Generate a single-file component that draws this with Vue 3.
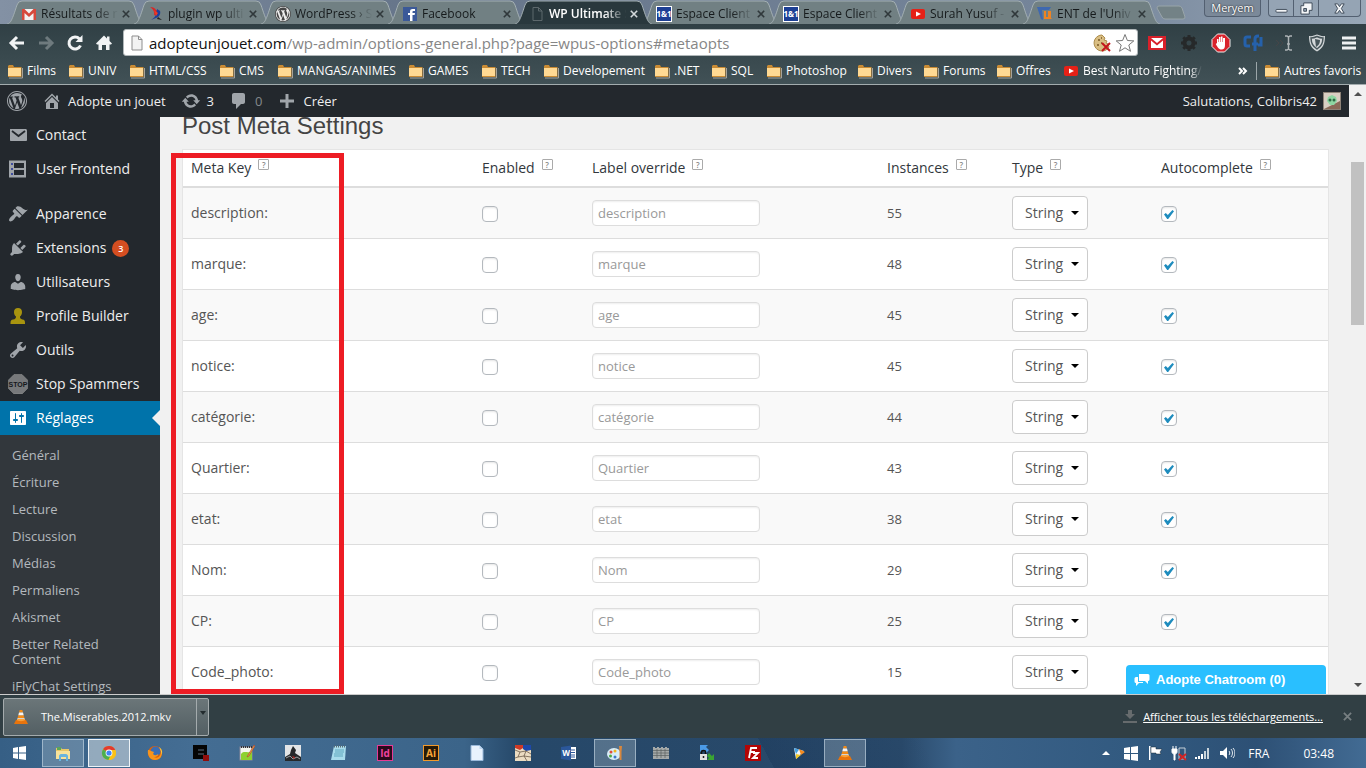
<script setup>
import { ref } from 'vue';

const oneAndOne = '<rect width="16" height="16" fill="#fff"/><rect x="1" y="1" width="14" height="14" fill="#1c3f94"/><text x="8" y="11" font-size="8" font-weight="bold" text-anchor="middle" fill="#fff" font-family="Open Sans, sans-serif">1&amp;1</text>';
const youtube = '<rect x="1" y="3" width="14" height="10" rx="2" fill="#e62117"/><path d="M6 5.500l5 2.500-5 2.500z" fill="#fff"/>';
const wpMark = 'M20 10c0-5.520-4.480-10-10-10S0 4.480 0 10s4.480 10 10 10 10-4.480 10-10zM10 1.010c4.970 0 8.990 4.020 8.990 8.990s-4.020 8.990-8.990 8.990S1.010 14.970 1.010 10 5.030 1.010 10 1.010zM8.010 14.820L4.960 6.610c.49-.03 1.050-.08 1.050-.08.43-.05.38-1.010-.06-.99 0 0-1.290.1-2.130.1-.15 0-.33 0-.52-.01 1.440-2.170 3.900-3.600 6.700-3.600 2.090 0 3.990.79 5.410 2.090-.6-.08-1.450.35-1.450 1.420 0 .66.38 1.220.79 1.880.31.54.5 1.220.5 2.210 0 1.340-1.270 4.480-1.270 4.480l-2.710-7.500c.48-.03.75-.16.75-.16.43-.05.38-1.100-.05-1.080 0 0-1.300.11-2.140.11-.78 0-2.110-.11-2.110-.11-.43-.02-.48 1.060-.05 1.080l.84.08 1.120 3.040zm6.020 2.150L16.640 10s.67-1.690.39-3.810c.63 1.140.94 2.420.94 3.810 0 2.960-1.560 5.580-3.940 6.970zM2.680 6.770L6.500 17.250c-2.670-1.300-4.470-4.080-4.470-7.250 0-1.160.2-2.230.65-3.230zm7.450 4.530l2.290 6.250c-.75.27-1.570.42-2.420.42-.72 0-1.410-.11-2.060-.3z';
const cone = '<path d="M6.700 1h2.600l.7 2.600H6zM5.300 6.200h5.400l.8 3H4.500z" fill="#f28a17"/><path d="M6 3.600h4l.7 2.600H5.300zM4.500 9.200h7l.5 2.300H4z" fill="#f4f4f4"/><path d="M3 11h10l2 4H1z" fill="#e8740c"/><path d="M4 11c1 1.500 7 1.500 8 0l-.3-1H4.300z" fill="#f9a13a"/>';

const tabs = [
  { title: 'Résultats de r', icon: '<rect x="1" y="3" width="14" height="11" fill="#f2f2f2"/><path d="M1 3h2.500L8 7.500 12.500 3H15v11h-2.500V7L8 11 3.500 7v7H1z" fill="#d6493c"/>' },
  { title: 'plugin wp ulti', icon: '<path d="M2 1c3 0 5 1 6 3l4 1c0 3-1 4-3 5L6 9C7 6 5 3 2 1z" fill="#d92626"/><path d="M9 3l3 2c1 3-1 6-4 7l-5 2c3-2 5-4 5-6z" fill="#1f3f9c"/><path d="M6 4l4 3-2 3z" fill="#f03a22"/><path d="M10 11l4 3-5-1z" fill="#222"/>' },
  { title: 'WordPress › S', icon: `<circle cx="8" cy="8" r="7.500" fill="#eee"/><g transform="scale(.8)"><path d="${wpMark}" fill="#464646"/></g>` },
  { title: 'Facebook', icon: '<rect x="1" y="1" width="14" height="14" fill="#3b5998"/><path d="M8 15V9H6V7h2V5.500C8 3.800 9 3 10.500 3H13v2h-1.500c-.7 0-1 .3-1 1v1H13l-.4 2h-2.100v6z" fill="#fff"/>' },
  { title: 'WP Ultimate S', active: true, icon: '<path d="M4 1.500h5.500L13 5v9.500H4zM9.500 1.500V5H13" fill="none" stroke="#5d686c"/>' },
  { title: 'Espace Client', icon: oneAndOne },
  { title: 'Espace Client', icon: oneAndOne },
  { title: 'Surah Yusuf -', icon: youtube },
  { title: "ENT de l'Univ", icon: '<path d="M0 1h14l-2 3H5l1 10-2-1z" fill="#3e68b0"/><path d="M7 5h2v6h2V5h3v7l1 1h-8z" fill="#ee8322"/>' },
];

const bookmarks = [
  'Films', 'UNIV', 'HTML/CSS', 'CMS', 'MANGAS/ANIMES', 'GAMES', 'TECH', 'Developement',
  '.NET', 'SQL', 'Photoshop', 'Divers', 'Forums', 'Offres',
];

const extensions = [
  { name: 'Gmail', icon: '<rect x="1" y="3" width="18" height="14" fill="#d8202a"/><path d="M4 5h12l-6 5z" fill="#fff"/><path d="M4 15V7.500l6 5 6-5V15z" fill="#fff"/>' },
  { name: 'Réglages rapides', icon: '<circle cx="10" cy="10" r="4.500" fill="none" stroke="#26292a" stroke-width="4"/><path d="M10 2v4M10 14v4M2 10h4M14 10h4M4.300 4.300l2.700 2.700M13 13l2.700 2.700M4.300 15.700L7 13M13 7l2.700-2.700" stroke="#26292a" stroke-width="3"/>' },
  { name: 'Bloqueur', icon: '<path d="M6.500 1h7L19 6.500v7L13.500 19h-7L1 13.500v-7z" fill="#d9222b" stroke="#eee"/><path d="M6 10V6h1.500v3h.5V4h1.500v5h.5V3.500h1.500V9h.5V5H14v7c0 3-1 4.500-3.500 4.500S7 15 4.800 11l1.200-1z" fill="#fff"/>' },
  { name: 'Réseau social', icon: '<path d="M8 4H4Q2 4 2 6v5q0 2 2 2h3M12 18V6q0-3 3-3h1M9 11h6M15 12h3V4" fill="none" stroke="#2561ab" stroke-width="3"/>' },
  { name: 'Curseur', icon: '<path d="M1 7l3 3-3 3M5 7l3 3-3 3" stroke="#454547" fill="none"/><path d="M10 3h2l1.500 1L15 3h2M13.500 4v12M10 17h2l1.500-1 1.500 1h2M12 11h3" stroke="#aeb4b6" stroke-width="1.500" fill="none"/>' },
  { name: 'Protection', icon: '<path d="M2 3c3 .5 5.500-.5 8-1.500C12.500 2.500 15 3.500 18 3c0 8-2 12-8 15.500C4 15 2 11 2 3z" fill="#d3d7d9"/><path d="M4 5c2.500 0 4-.5 6-1.500 2 1 3.500 1.500 6 1.500-.3 5.500-1.500 8-6 11-4.500-3-5.700-5.500-6-11z" fill="none" stroke="#47555a" stroke-width="1.500"/><path d="M8 6l5 1c0 3-1 5-4 7z" fill="#47555a"/>' },
  { name: 'Menu', icon: '<path d="M3 5h14M3 10h14M3 15h14" stroke="#eef1f2" stroke-width="3"/>' },
];

const menu = [
  { label: 'Contact', icon: '<path d="M2.500 4h15c.8 0 1.500.6 1.500 1.500V15c0 .6-.5 1-1.500 1H3c-.6 0-1-.4-1-1V5c0-.6 0-1 .5-1z" fill="#a0a5aa"/><path d="M4 6l6.500 5L17 6" fill="none" stroke="#23282d" stroke-width="1.800"/>' },
  { label: 'User Frontend', icon: '<rect x="1" y="1.500" width="17" height="17" fill="#a0a5aa"/><path d="M6 4h10v5H6zM6 11h10v5H6z" fill="#23282d"/><path d="M3 4h2v2H3zM3 9h2v2H3zM3 14h2v2H3z" fill="#3f4ea0"/>' },
  { label: 'Apparence', gap: true, icon: '<path d="M14.480 11.060L7.410 3.990l1.500-1.500c.5-.56 2.300-.47 3.510.32 1.210.8 1.430 1.280 2.910 2.100 1.180.64 2.450 1.260 4.450.85zm-.71.71L6.700 4.700 4.930 6.470c-.39.39-.39 1.020 0 1.410l1.060 1.060c.39.39.39 1.030 0 1.420-.6.6-1.430 1.110-2.210 1.690-.35.26-.7.53-1.010.84C1.430 14.230.4 16.080 1.400 17.070c.99 1 2.840-.03 4.180-1.360.31-.31.58-.66.85-1.020.57-.78 1.080-1.610 1.690-2.210.39-.39 1.020-.39 1.410 0l1.060 1.060c.39.39 1.020.39 1.410 0z" fill="#a0a5aa"/>' },
  { label: 'Extensions', badge: 3, icon: '<path d="M13.110 4.360L9.870 7.600 8 5.730l3.240-3.240c.35-.34 1.050-.2 1.560.32.52.51.66 1.210.31 1.550zm-8 1.770l.91-1.120 9.010 9.010-1.190.84c-.71.71-2.630 1.160-3.820 1.160H6.140L4.900 17.260c-.59.59-1.540.59-2.120 0-.59-.58-.59-1.530 0-2.120l1.240-1.240v-3.880c0-1.130.4-3.190 1.090-3.890zm7.260 3.970l3.240-3.240c.34-.35 1.040-.21 1.550.31.52.51.66 1.210.31 1.550l-3.240 3.250z" fill="#a0a5aa"/>' },
  { label: 'Utilisateurs', icon: '<path d="M10 9.250c-2.270 0-2.730-3.440-2.730-3.440C7 4.020 7.820 2 9.970 2c2.160 0 2.980 2.020 2.710 3.810 0 0-.41 3.440-2.680 3.440zm0 2.570L12.720 10c2.390 0 4.520 2.330 4.520 4.530v2.490s-3.650 1.130-7.240 1.130c-3.650 0-7.240-1.130-7.240-1.130v-2.490c0-2.250 1.940-4.480 4.470-4.480z" fill="#a0a5aa"/>' },
  { label: 'Profile Builder', icon: '<path d="M10 2c2.500 0 4 1.500 4 4 0 2-.8 3.500-2 4.500 0 2 .5 2.500 2.500 3 2 .4 2.500 1 2.500 3.500v1H2.500v-1c0-2.500.7-3.100 2.700-3.500S8 12.500 8 10.500C6.800 9.500 6 8 6 6c0-2.500 1.500-4 4-4z" fill="#a8940f"/>' },
  { label: 'Outils', icon: '<path d="M16.680 9.770c-1.340 1.340-3.300 1.670-4.950.99l-5.410 6.520c-.99.99-2.590.99-3.580 0s-.99-2.590 0-3.570l6.520-5.420c-.68-1.650-.35-3.610.99-4.950 1.280-1.280 3.120-1.620 4.720-1.060l-2.890 2.890 2.820 2.820 2.860-2.870c.53 1.580.18 3.390-1.080 4.650zM3.810 16.210c.4.39 1.040.39 1.430 0 .4-.4.4-1.040 0-1.430-.39-.4-1.030-.4-1.430 0-.39.39-.39 1.030 0 1.430z" fill="#a0a5aa"/>' },
  { label: 'Stop Spammers', icon: '<path d="M6 .5h8l5.500 5.500v8.500L14 20H6L.5 14.500V6z" fill="#77797b" stroke="#999" stroke-width=".5"/><text x="10" y="13" text-anchor="middle" font-size="7" font-weight="bold" fill="#15181b" font-family="Liberation Sans, sans-serif">STOP</text>' },
  { label: 'Réglages', current: true, icon: '<path d="M18 16V4c0-.55-.45-1-1-1H3c-.55 0-1 .45-1 1v12c0 .55.45 1 1 1h14c.55 0 1-.45 1-1zM8 11h1c.55 0 1 .45 1 1s-.45 1-1 1H8v1.500c0 .28-.22.5-.5.5s-.5-.22-.5-.5V13H6c-.55 0-1-.45-1-1s.45-1 1-1h1V5.500c0-.28.22-.5.5-.5s.5.22.5.5V11zm5-2h-1c-.55 0-1-.45-1-1s.45-1 1-1h1V5.500c0-.28.22-.5.5-.5s.5.22.5.5V7h1c.55 0 1 .45 1 1s-.45 1-1 1h-1v5.500c0 .28-.22.5-.5.5s-.5-.22-.5-.5V9z" fill="#fff"/>' },
];

const submenu = [
  'Général', 'Écriture', 'Lecture', 'Discussion', 'Médias', 'Permaliens', 'Akismet',
  'Better Related Content', 'iFlyChat Settings',
];

const columns = ['Meta Key', 'Enabled', 'Label override', 'Instances', 'Type', 'Autocomplete'];

const rows = ref([
  { key: 'description', count: 55 },
  { key: 'marque', count: 48 },
  { key: 'age', count: 45 },
  { key: 'notice', count: 45 },
  { key: 'catégorie', count: 44 },
  { key: 'Quartier', count: 43 },
  { key: 'etat', count: 38 },
  { key: 'Nom', count: 29 },
  { key: 'CP', count: 25 },
  { key: 'Code_photo', count: 15 },
].map((row) => ({ ...row, enabled: false, label: '', type: 'String', autocomplete: true })));

const taskbar = [
  { name: 'Explorateur', open: true, icon: '<path d="M1 3h5l1 1h7v10H1z" fill="#e9c766"/><path d="M2 2h4v3H2z" fill="#5aa55a"/><path d="M1 6h14v8H1z" fill="#f8e29a"/><path d="M4 16v-5c0-1 1-2 2-2h5c1 0 2 1 2 2v5h-2v-4H6v4z" fill="#6ab4dd"/>' },
  { name: 'Chrome', open: true, front: true, icon: '<circle cx="8" cy="8" r="7" fill="#fbc116"/><path d="M8 8L2 4.300A7 7 0 0 1 14.300 5z" fill="#e33b2e"/><path d="M8 8L2 4.300A7 7 0 0 0 7.500 15L10.500 9z" fill="#4caf50"/><path d="M7.500 15A7 7 0 0 0 14.300 5H8l2.500 4z" fill="#fbc116"/><circle cx="8" cy="8" r="3.400" fill="#fff"/><circle cx="8" cy="8" r="2.600" fill="#4285f4"/>' },
  { name: 'Firefox', icon: '<circle cx="8" cy="8" r="7" fill="#e66000"/><circle cx="8.500" cy="6.500" r="5" fill="#3c6eb4"/><path d="M1 5c1 0 2 0 3 1l3 1-1 2c2 2 4 1 5 0 1 1-1 3-4 3 4 2 7-1 7-6 2 5-1 9-6 9-5 0-8-5-7-10z" fill="#f7941d"/><path d="M12 2c3 2 4 5 2.500 8 0-3-1-5-2.500-8z" fill="#ffcb3d"/>' },
  { name: 'Éditeur', icon: '<rect width="14" height="14" fill="#050505"/><path d="M5 5h6M5 9h6" stroke="#5f6f80" stroke-width="1"/><rect x="10" y="10" width="6" height="6" fill="#8f0d0d"/>' },
  { name: 'Notepad++', icon: '<rect x="1" y="2" width="12" height="13" fill="#f4f6ee" stroke="#889"/><path d="M2 9c3-4 7 0 11-3v9H2z" fill="#8ed12f"/><path d="M2 2h11" stroke="#333" stroke-width="2" stroke-dasharray="1 1"/><path d="M15 0l1 1-6 10-2 1 1-2z" fill="#e8a13a" stroke="#a33" stroke-width=".5"/>' },
  { name: 'Jeu', icon: '<rect width="16" height="16" fill="#e3e5e7"/><path d="M8 1l3 4-1 3 6 4v4H0v-4l5-3 1-4z" fill="#25282b"/><path d="M1 13l4-2 3 3 4-2 3 2" stroke="#9a9da0" fill="none"/><path d="M7 11l3 1-1 2z" fill="#bb2a25"/>' },
  { name: 'Bloc-notes', icon: '<path d="M3 1h12l-1 14H0z" fill="#a9dcec"/><path d="M4 5h9M4 7h9M3 9h9M3 11h9" stroke="#5fa7bd"/><path d="M3 1.500h12" stroke="#5b6c74" stroke-width="2" stroke-dasharray="1 1"/>' },
  { name: 'InDesign', icon: '<rect x=".5" y=".5" width="15" height="15" fill="#2b0a1c" stroke="#e73a95"/><text x="8" y="12" text-anchor="middle" font-size="10" font-weight="bold" fill="#f0439f" font-family="Open Sans, sans-serif">Id</text>' },
  { name: 'Illustrator', icon: '<rect x=".5" y=".5" width="15" height="15" fill="#271a07" stroke="#f29a2b"/><text x="8" y="12" text-anchor="middle" font-size="10" font-weight="bold" fill="#f9a63a" font-family="Open Sans, sans-serif">Ai</text>' },
  { name: 'Document', icon: '<path d="M2 .5h8.500L14 4v11.500H2z" fill="#e8f2fd" stroke="#9ab9da"/><path d="M10.500.5V4H14" fill="#bcd5ef"/>' },
  { name: 'Cartes', icon: '<rect width="16" height="16" fill="#ecdcc2"/><path d="M0 0h8v3L5 5 0 3z" fill="#cf3a26"/><path d="M8 0h8v5l-5 1-3-2z" fill="#1d48a8"/><path d="M0 5l5 2 6-1 5 3M5 7l-2 5M11 6l-2 5 3 5M3 12l-3 1M3 12l6-1M9 11l7 1" fill="none" stroke="#5c4b3a" stroke-width=".7"/>' },
  { name: 'Word', icon: '<path d="M8 2h7v12H8z" fill="#fff"/><path d="M9 5h5M9 7.500h5M9 10h5M9 12h5" stroke="#2b579a"/><path d="M0 2l10-1.500v15L0 14z" fill="#2b579a"/><text x="5" y="11" text-anchor="middle" font-size="8" font-weight="bold" fill="#fff" font-family="Open Sans, sans-serif">W</text>' },
  { name: 'Paint', open: true, icon: '<ellipse cx="7" cy="9" rx="7" ry="6" fill="#d8edf8"/><circle cx="4" cy="7" r="1.500" fill="#e04d3c"/><circle cx="8" cy="6" r="1.500" fill="#f2b51c"/><circle cx="3.500" cy="11" r="1.500" fill="#50a942"/><circle cx="8" cy="12" r="1.500" fill="#3b77c8"/><path d="M12 1h3l-.5 6v8h-2V7z" fill="#d9873c"/>' },
  { name: 'Clavier', icon: '<path d="M0 2h2v1h2V2h2v1h2V2h2v1h2V2h2v1h2v11H0z" fill="#a5a9a8"/><path d="M0 5.500h16M0 8h16M0 10.500h16M4 4v9M8 4v9M12 4v9" stroke="#59605f" stroke-width=".7"/>' },
  { name: 'Transfert', icon: '<path d="M1 0h8L7 2l3 3-3 3-3-3-3 2z" fill="#4b9be8"/><path d="M15 15H8l2-2-2-2 2-3 3 3 2-2z" fill="#3aa432"/><rect x="1" y="9" width="7" height="6" fill="#e2e2e2"/><path d="M2.500 9V7c0-2 4-2 4 0v2" fill="none" stroke="#111" stroke-width="1.500"/><path d="M4.500 11v2" stroke="#222" stroke-width="1.500"/>' },
  { name: 'FileZilla', icon: '<rect width="16" height="16" fill="#b30505"/><path d="M4 13L6 3h6M5 7h5M8 8h5l-5 5h5" fill="none" stroke="#fff" stroke-width="1.800"/>' },
  { name: 'Lecteur', icon: '<path d="M3 3l10 3-8 8z" fill="#f3f6f8"/><path d="M3 3l5 1.500L5 9z" fill="#45a0e0"/><path d="M8 4l6 3-4 3z" fill="#f58b1f"/><path d="M10 10l-5 4V9z" fill="#f5c928"/>' },
  { name: 'VLC', open: true, icon: cone },
];

const tray = [
  { name: 'Windows', icon: '<path d="M1 3l6-1v6H1zM8 2l7-1v7H8zM1 9h6v6l-6-1zM8 9h7v7l-7-1z" fill="#fff"/>' },
  { name: 'Centre de maintenance', icon: '<path d="M2 1h1.500v14H2z" fill="#fff"/><path d="M4 2h5v2h6l-2 3 1 2H9V8H4z" fill="#fff" stroke="#1e2c3a" stroke-width=".5"/>' },
  { name: 'Alimentation', icon: '<path d="M2 1v3M5 1v3M1 4h5v3c0 1-1 2-2 2v6H3V9C2 9 1 8 1 7z" fill="#fff" stroke="#fff"/><path d="M8 3h6v11H8z" fill="none" stroke="#c4ced6"/><path d="M8 9l7 6M15 9l-7 6" stroke="#d42323" stroke-width="2"/>' },
  { name: 'Réseau', icon: '<path d="M1 14v-2M4 14v-3M7 14V9" stroke="#fff" stroke-width="2"/><path d="M10 14V6M13 14V3" stroke="#c9d3da" stroke-width="2"/>' },
  { name: 'Volume', icon: '<path d="M1 6h3l4-4v12l-4-4H1z" fill="#fff"/><path d="M10 6c1 1 1 3 0 4M12 4c2 2 2 6 0 8M14 3c2.500 3 2.500 7 0 10" fill="none" stroke="#e1e8ee"/>' },
];
</script>

<template>
  <div class="screen">
    <header class="chrome">
      <div class="tab-strip">
        <div class="tabs">
          <div v-for="(tab, i) in tabs" :key="i" class="tab" :class="{ active: tab.active }">
            <svg class="tab-shape" viewBox="0 0 137 24" preserveAspectRatio="none">
              <path d="M0 24C4 23 5 20 10 5Q11 1 15 1H122Q126 1 127 5C132 20 133 23 137 24" />
            </svg>
            <svg class="icon16" viewBox="0 0 16 16" v-html="tab.icon"></svg>
            <span class="tab-title">{{ tab.title }}</span>
            <button type="button" class="tab-close" aria-label="Fermer">
              <svg viewBox="0 0 10 10"><path d="M1 1l8 8M9 1L1 9" /></svg>
            </button>
          </div>
        </div>
        <button type="button" class="new-tab" aria-label="Nouvel onglet">
          <svg viewBox="0 0 30 15"><path d="M3 1h20q2 0 3 2l3 9q0 2-2 2H9q-2 0-3-2L1 3q0-2 2-2z" /></svg>
        </button>
        <div class="window-buttons">
          <button type="button" class="profile">Meryem</button>
          <div class="win-group">
            <button type="button" aria-label="Réduire">
              <svg viewBox="0 0 14 14"><rect x="1" y="8" width="12" height="3" rx="1" /></svg>
            </button>
            <button type="button" aria-label="Restaurer">
              <svg viewBox="0 0 14 14"><path d="M4 1h9v8h-3v4H1V4h3zM4 7h3v3H4z" fill-rule="evenodd" /></svg>
            </button>
            <button type="button" class="win-close" aria-label="Fermer la fenêtre">
              <svg viewBox="0 0 14 14"><path d="M2 2h3l2 3 2-3h3L9 7l3 5H9L7 9l-2 3H2l3-5z" /></svg>
            </button>
          </div>
        </div>
      </div>

      <div class="toolbar">
        <button type="button" class="tool" aria-label="Précédent">
          <svg viewBox="0 0 20 20"><path d="M17 10H5M10 4l-6 6 6 6" class="arrow" /></svg>
        </button>
        <button type="button" class="tool dim" aria-label="Suivant">
          <svg viewBox="0 0 20 20"><path d="M3 10h12M10 4l6 6-6 6" class="arrow" /></svg>
        </button>
        <button type="button" class="tool" aria-label="Actualiser">
          <svg viewBox="0 0 20 20"><path d="M15.500 12.500a6 6 0 1 1-1-6.500" class="arrow" /><path d="M17.500 2v7h-7z" class="solid" /></svg>
        </button>
        <button type="button" class="tool" aria-label="Accueil">
          <svg viewBox="0 0 20 20"><path d="M10 2.500l3 3V3.500h2.500V8l2.500 2.500-1 1h-1.500V17H12v-5H8v5H4.500v-5.500H3l-1-1z" class="solid" /></svg>
        </button>
        <div class="address">
          <svg class="icon16" viewBox="0 0 16 16"><path d="M3 1h6.500L13 4.500V15H3zM9.500 1v3.500H13" fill="#f3f3f3" stroke="#8d8d8d" /></svg>
          <a class="url" href="#metaopts"><span>adopteunjouet.com</span>/wp-admin/options-general.php?page=wpus-options#metaopts</a>
          <svg class="icon20" viewBox="0 0 20 20">
            <path d="M10 2a8 8 0 1 0 7 12l-1-3-2-1 1-2-3-1 1-2z" fill="#d9be83" stroke="#ad8d4d" />
            <path d="M6 7h2M9 5h1M5 12h2M9 10h1" stroke="#7a5a26" stroke-width="1.500" />
            <path d="M10 10l8 8M18 10l-8 8" stroke="#c4161c" stroke-width="2" />
          </svg>
          <svg class="icon20" viewBox="0 0 20 20"><path d="M10 1.500l2.400 6 6.400.4-5 4.100 1.700 6.300-5.500-3.500-5.500 3.500L6.200 12l-5-4.100 6.400-.4z" fill="#fff" stroke="#777" /></svg>
        </div>
        <div class="extensions">
          <button v-for="ext in extensions" :key="ext.name" type="button" class="tool" :aria-label="ext.name">
            <svg viewBox="0 0 20 20" v-html="ext.icon"></svg>
          </button>
        </div>
      </div>

      <nav class="bookmarks">
        <a v-for="name in bookmarks" :key="name" href="#">
          <svg class="icon16" viewBox="0 0 16 16"><path d="M1 3l1-1h4l1 2h7.500v10H1z" fill="#c98b34" /><path d="M1 5h13v8H1z" fill="#ffd993" /><path d="M15.500 5v10H2" fill="none" stroke="#a6a39a" /></svg>
          <span>{{ name }}</span>
        </a>
        <a href="#" class="long">
          <svg class="icon16" viewBox="0 0 16 16" v-html="youtube"></svg>
          <span>Best Naruto Fighting/</span>
        </a>
        <button type="button" class="more" aria-label="Plus de favoris">
          <svg viewBox="0 0 10 10"><path d="M1 2l3 3-3 3M5 2l3 3-3 3" /></svg>
        </button>
        <a href="#" class="others">
          <svg class="icon16" viewBox="0 0 16 16"><path d="M1 3l1-1h4l1 2h7.500v10H1z" fill="#c98b34" /><path d="M1 5h13v8H1z" fill="#ffd993" /><path d="M15.500 5v10H2" fill="none" stroke="#a6a39a" /></svg>
          <span>Autres favoris</span>
        </a>
      </nav>
    </header>

    <div class="viewport">
      <div class="page">
        <div class="admin-bar">
          <a href="#" class="wp-logo" aria-label="WordPress"><svg viewBox="0 0 20 20"><path :d="wpMark" /></svg></a>
          <a href="#" class="site">
            <svg viewBox="0 0 20 20"><path d="M16 8.500l1.530 1.530-1.060 1.060L10 4.600l-6.470 6.490-1.060-1.060L10 2.500l4 4v-2h2v4zm-6-2.460l6 5.990V18H4v-5.970zM12 17v-5H8v5h4z" /></svg>
            Adopte un jouet
          </a>
          <a href="#" class="updates">
            <svg viewBox="0 0 20 20"><path d="M10.200 3.280c3.530 0 6.430 2.610 6.920 6h2.080l-3.500 4-3.500-4h2.320c-.45-1.970-2.210-3.450-4.320-3.450-1.450 0-2.730.71-3.540 1.780L4.950 5.660C6.230 4.200 8.110 3.280 10.200 3.280zm-.4 13.440c-3.520 0-6.430-2.610-6.920-6H.8l3.500-4c1.170 1.330 2.330 2.670 3.500 4H5.480c.45 1.970 2.210 3.450 4.320 3.450 1.450 0 2.730-.71 3.540-1.780l1.710 1.950c-1.280 1.460-3.150 2.380-5.250 2.380z" /></svg>
            3
          </a>
          <a href="#" class="comments">
            <svg viewBox="0 0 20 20"><path d="M5 2h9c1.100 0 2 .9 2 2v7c0 1.100-.9 2-2 2h-2l-5 5v-5H5c-1.100 0-2-.9-2-2V4c0-1.100.9-2 2-2z" /></svg>
            0
          </a>
          <a href="#">
            <svg viewBox="0 0 20 20"><path d="M17 8.500v3h-5.500V17h-3v-5.500H3v-3h5.500V3h3v5.500z" /></svg>
            Créer
          </a>
          <a href="#" class="account">
            Salutations, Colibris42
            <svg viewBox="0 0 18 18">
              <rect width="18" height="18" fill="#8f8378" /><rect x="1" y="1" width="16" height="16" fill="#d9cfc3" />
              <path d="M1 17L17 9v8z" fill="#8b6a58" /><path d="M5 5l4-2 4 2 1 4-3 4H7L4 9z" fill="#8ed7a2" />
              <circle cx="7" cy="8" r="1.500" fill="#2f6b45" /><circle cx="11" cy="8" r="1.500" fill="#2f6b45" />
            </svg>
          </a>
        </div>

        <div class="admin">
          <nav class="side">
            <a v-for="item in menu" :key="item.label" href="#" class="side-item" :class="{ spaced: item.gap, current: item.current }">
              <svg viewBox="0 0 20 20" v-html="item.icon"></svg>
              <span class="side-label">{{ item.label }}</span>
              <span v-if="item.badge" class="badge">{{ item.badge }}</span>
            </a>
            <div class="submenu">
              <a v-for="item in submenu" :key="item" href="#">{{ item }}</a>
            </div>
          </nav>

          <main class="content">
            <h1>Post Meta Settings</h1>
            <table>
              <colgroup>
                <col class="c-key"><col class="c-enabled"><col class="c-label"><col class="c-count"><col class="c-type"><col>
              </colgroup>
              <thead>
                <tr>
                  <th v-for="col in columns" :key="col" scope="col">{{ col }}<span class="help">?</span></th>
                </tr>
              </thead>
              <tbody>
                <tr v-for="row in rows" :key="row.key">
                  <td class="key">{{ row.key }}:</td>
                  <td><input v-model="row.enabled" type="checkbox" :aria-label="`Enabled ${row.key}`"></td>
                  <td><input v-model="row.label" type="text" :placeholder="row.key" :aria-label="`Label ${row.key}`"></td>
                  <td class="count">{{ row.count }}</td>
                  <td>
                    <div class="select">
                      <select v-model="row.type" :aria-label="`Type ${row.key}`">
                        <option>String</option>
                        <option>Number</option>
                      </select>
                      <svg viewBox="0 0 8 4"><path d="M0 0h8L4 4z" /></svg>
                    </div>
                  </td>
                  <td><input v-model="row.autocomplete" type="checkbox" :aria-label="`Autocomplete ${row.key}`"></td>
                </tr>
              </tbody>
            </table>
            <div class="highlight"></div>
          </main>
        </div>

        <button type="button" class="chat">
          <svg viewBox="0 0 16 14"><path d="M5 1h9q1.500 0 1.500 1.500v4Q15.500 8 14 8v3l-3-3H5z" /><path d="M4 4H2Q.5 4 .5 5.500v3Q.5 10 2 10v3l3-3h4V9H4z" /></svg>
          Adopte Chatroom (0)
        </button>
      </div>

      <div class="scrollbar">
        <svg viewBox="0 0 8 4"><path d="M0 4h8L4 0z" /></svg>
        <div class="thumb"></div>
        <svg viewBox="0 0 8 4"><path d="M0 0h8L4 4z" /></svg>
      </div>
    </div>

    <div class="downloads">
      <div class="download">
        <button type="button" class="file"><svg class="icon16" viewBox="0 0 16 16" v-html="cone"></svg>The.Miserables.2012.mkv</button>
        <button type="button" class="file-menu" aria-label="Options"><svg viewBox="0 0 8 4"><path d="M1 0h6L4 4z" /></svg></button>
      </div>
      <a href="#" class="show-all">
        <svg viewBox="0 0 14 13"><path d="M5 0h4v4h3L7 9 2 4h3zM0 11h14v2H0z" /></svg>
        <span>Afficher tous les téléchargements...</span>
      </a>
      <button type="button" class="shelf-close" aria-label="Fermer la barre"><svg viewBox="0 0 10 10"><path d="M1 1l8 8M9 1L1 9" /></svg></button>
    </div>

    <footer class="taskbar">
      <button type="button" class="start" aria-label="Démarrer">
        <svg class="icon16" viewBox="0 0 16 16"><path d="M2 3l5-1v5.500H2zM8 2l7-1v6.500H8zM2 8.500h5V14l-5-1zM8 8.500h7V15l-7-1z" fill="#fff" /></svg>
      </button>
      <button v-for="app in taskbar" :key="app.name" type="button" class="app" :class="{ open: app.open, front: app.front }" :aria-label="app.name">
        <svg class="icon16" viewBox="0 0 16 16" v-html="app.icon"></svg>
      </button>
      <div class="tray">
        <svg class="up" viewBox="0 0 8 4"><path d="M0 4h8L4 0z" fill="#fff" /></svg>
        <svg v-for="item in tray" :key="item.name" class="icon16" viewBox="0 0 16 16" v-html="item.icon"></svg>
      </div>
      <span class="lang">FRA</span>
      <time>03:48</time>
    </footer>
  </div>
</template>

<style>
body {
  margin: 0;
  overflow: hidden;
}
</style>

<style scoped>
.screen {
  display: flex;
  flex-direction: column;
  height: 100vh;
  overflow: hidden;
  font-family: "Open Sans", "Noto Sans", sans-serif;
  font-size: 12px;
}

.screen *,
.screen *::before {
  box-sizing: border-box;
}

button {
  border: 0;
  padding: 0;
  background: none;
  font-family: inherit;
  font-size: inherit;
  color: inherit;
}

a {
  color: inherit;
  text-decoration: none;
}

svg {
  display: block;
  flex: none;
}

.icon16 {
  width: 16px;
  height: 16px;
}

.icon20 {
  width: 20px;
  height: 20px;
}

/* Browser frame */
.chrome {
  flex: none;
  background: linear-gradient(#2a383d, #35454a 50%, #415156);
  border-bottom: 1px solid #a3acae;
}

.tab-strip {
  display: flex;
  height: 24px;
  background: linear-gradient(90deg, #8391a4, #66758a 30%, #76869b 80%, #98a7b7);
}

.tabs {
  display: flex;
  flex: 0 1 1160px;
  min-width: 0;
  padding: 0 10px 0 7px;
}

.tab {
  position: relative;
  flex: 0 1 137px;
  display: flex;
  align-items: center;
  min-width: 0;
  margin-right: -10px;
  padding: 3px 13px 0 14px;
  color: #161a1c;
}

.tab.active {
  z-index: 1;
  color: #fff;
  font-weight: 600;
}

.tab > * {
  position: relative;
}

.tab .tab-shape {
  position: absolute;
  inset: 0;
  width: 100%;
  height: 100%;
  fill: #718083;
  stroke: #a3afb3;
}

.tab.active .tab-shape {
  fill: #29383d;
}

.tab-title {
  flex: 1;
  margin: 0 1px 0 4px;
  overflow: hidden;
  white-space: nowrap;
  mask-image: linear-gradient(90deg, #000 70%, transparent 98%);
}

.tab-close svg {
  width: 8px;
  height: 8px;
  margin: 0 1px;
  fill: none;
  stroke: #30383b;
  stroke-width: 2;
}

.tab.active .tab-close svg {
  stroke: #d4dadc;
}

.new-tab svg {
  width: 30px;
  height: 15px;
  margin-left: -4px;
  fill: #738286;
  stroke: #99a5a9;
}

.window-buttons {
  display: flex;
  gap: 7px;
  height: 17px;
  margin: 0 5px 0 auto;
}

.profile {
  width: 57px;
  border: 1px solid #536071;
  border-top: 0;
  border-radius: 0 0 4px 4px;
  background: #7b8999;
  color: #fff;
  font-size: 11px;
  line-height: 16px;
  text-shadow: 0 0 2px #000;
}

.win-group {
  display: flex;
  border: 1px solid #536071;
  border-top: 0;
  border-radius: 0 0 4px 4px;
  background: #95a4b4;
}

.win-group button {
  display: flex;
  align-items: center;
  justify-content: center;
  width: 25px;
  border-right: 1px solid #536071;
}

.win-group .win-close {
  width: 41px;
  border-right: 0;
}

.win-group svg {
  width: 13px;
  height: 13px;
  fill: #f4f6f8;
  stroke: #3a4654;
}

.toolbar {
  display: flex;
  align-items: center;
  gap: 9px;
  height: 37px;
  padding: 0 7px;
}

.tool svg {
  width: 20px;
  height: 20px;
}

.tool.dim {
  opacity: 0.3;
}

.arrow {
  fill: none;
  stroke: #f2f4f5;
  stroke-width: 3;
}

.solid {
  fill: #f2f4f5;
}

.address {
  flex: 1;
  display: flex;
  align-items: center;
  gap: 3px;
  min-width: 0;
  height: 27px;
  padding: 0 2px 0 5px;
  border: 1px solid #b0b7b9;
  border-radius: 3px;
  background: #fff;
}

.url {
  flex: 1;
  overflow: hidden;
  margin-left: 1px;
  white-space: nowrap;
  color: #868686;
  font-size: 15px;
}

.url span {
  color: #111;
}

.extensions {
  display: flex;
  gap: 12px;
}

.bookmarks {
  display: grid;
  grid-template-columns: 61px 61px 90px 58px 131px 73px 62px 111px 57px 55px 91px 66px 73px 67px 1fr 18px 110px;
  align-items: center;
  height: 23px;
  padding: 0 0 4px 7px;
  color: #fff;
}

.bookmarks a {
  display: flex;
  align-items: center;
  gap: 4px;
  min-width: 0;
  line-height: 18px;
  white-space: nowrap;
}

.bookmarks .long span {
  mask-image: linear-gradient(90deg, #000 90%, transparent);
}

.bookmarks .others {
  padding-left: 7px;
  border-left: 1px solid #9ca6a9;
}

.more svg {
  width: 10px;
  height: 10px;
  fill: none;
  stroke: #fff;
  stroke-width: 2;
}

/* Page */
.viewport {
  flex: 1;
  display: flex;
  min-height: 0;
  border-bottom: 1px solid #ccc;
}

.page {
  position: relative;
  flex: 1;
  display: flex;
  flex-direction: column;
  min-width: 0;
  overflow: hidden;
}

.admin-bar {
  z-index: 1;
  flex: none;
  display: flex;
  align-items: center;
  gap: 15px;
  height: 32px;
  padding: 0 8px 0 7px;
  background: #23282d;
  color: #eee;
  font-size: 13px;
}

.admin-bar a {
  display: flex;
  align-items: center;
  gap: 6px;
  white-space: nowrap;
}

.admin-bar svg {
  width: 20px;
  height: 20px;
  fill: #a0a5aa;
}

.admin-bar .comments {
  color: #84888c;
}

.admin-bar .account {
  margin-left: auto;
}

.admin-bar .account svg {
  width: 18px;
  height: 18px;
}

.admin {
  flex: 1;
  display: flex;
  min-height: 0;
}

.side {
  flex: 0 0 160px;
  display: flex;
  flex-direction: column;
  padding-top: 1px;
  overflow: hidden;
  background: #23282d;
  color: #eee;
  font-size: 14px;
}

.side-item {
  position: relative;
  flex: none;
  display: flex;
  align-items: center;
  gap: 8px;
  height: 34px;
  padding-left: 8px;
  white-space: nowrap;
}

.side-item.spaced {
  margin-top: 11px;
}

.side-item.current {
  background: #0073aa;
  color: #fff;
}

.side-item.current::after {
  content: "";
  position: absolute;
  right: 0;
  border: 8px solid transparent;
  border-left: 0;
  border-right-color: #f1f1f1;
}

.side-item svg {
  width: 20px;
  height: 20px;
}

.side-label {
  padding-bottom: 2px;
}

.badge {
  width: 17px;
  border-radius: 9px;
  margin-left: -2px;
  background: #d54e21;
  color: #fff;
  font-size: 9px;
  font-weight: 600;
  line-height: 17px;
  text-align: center;
}

.submenu {
  flex: 1 0 auto;
  padding-top: 7px;
  background: #32373c;
  color: #b4b9be;
  font-size: 13px;
  line-height: 15px;
}

.submenu a {
  display: block;
  padding: 6px 12px;
}

.content {
  position: relative;
  flex: 1;
  min-width: 0;
  padding: 0 20px 0 22px;
  background: #f1f1f1;
  color: #555;
}

h1 {
  margin: -3px 0 11px;
  color: #444;
  font-family: "Liberation Sans", sans-serif;
  font-size: 24px;
  font-weight: 400;
  line-height: 24px;
}

table {
  width: 100%;
  table-layout: fixed;
  border: 1px solid #e5e5e5;
  border-spacing: 0;
  background: #fff;
  font-size: 14px;
}

.c-key {
  width: 291px;
}

.c-enabled {
  width: 110px;
}

.c-label {
  width: 295px;
}

.c-count {
  width: 125px;
}

.c-type {
  width: 149px;
}

th {
  height: 38px;
  padding: 0 8px 2px;
  border-bottom: 2px solid #ddd;
  color: #32373c;
  font-weight: 400;
  text-align: left;
  white-space: nowrap;
}

.help {
  display: inline-block;
  width: 11px;
  margin-left: 7px;
  border: 1px solid #aaa;
  border-radius: 1px;
  color: #888;
  font-size: 8px;
  font-weight: 600;
  line-height: 9px;
  text-align: center;
  vertical-align: 5px;
}

td {
  height: 51px;
  padding: 0 8px;
  border-bottom: 1px solid #ddd;
}

td.key {
  padding-bottom: 2px;
}

tbody tr:nth-child(odd) {
  background: #f9f9f9;
}

.count {
  font-size: 13px;
}

input[type="checkbox"] {
  appearance: none;
  display: block;
  width: 16px;
  height: 16px;
  margin: 2px 0 0;
  border: 1px solid #b4b9be;
  border-radius: 4px;
  background: #fff;
  box-shadow: inset 0 1px 2px rgba(0, 0, 0, 0.1);
}

input[type="checkbox"]:checked::before {
  content: "";
  display: block;
  width: 10px;
  height: 9px;
  margin: 3px 2px;
  background: #1e8cbe;
  clip-path: polygon(0 50%, 18% 34%, 38% 56%, 84% 0, 100% 14%, 42% 100%, 32% 100%);
}

input[type="text"] {
  display: block;
  width: 168px;
  height: 26px;
  padding: 0 5px;
  border: 1px solid #ddd;
  border-radius: 4px;
  background: #fff;
  box-shadow: inset 0 1px 2px rgba(0, 0, 0, 0.07);
  font-family: inherit;
  font-size: 13px;
}

input[type="text"]::placeholder {
  color: #999;
}

.select {
  display: grid;
  align-items: center;
  width: 76px;
}

.select > * {
  grid-area: 1 / 1;
}

.select select {
  appearance: none;
  width: 100%;
  height: 34px;
  padding: 0 12px 2px;
  border: 1px solid #ccc;
  border-radius: 4px;
  background: #fff;
  color: #555;
  font-family: inherit;
  font-size: 14px;
}

.select svg {
  justify-self: end;
  width: 8px;
  height: 4px;
  margin-right: 9px;
  fill: #000;
  pointer-events: none;
}

.highlight {
  position: absolute;
  top: 36px;
  bottom: 0;
  left: 11px;
  width: 173px;
  border: 5px solid #ed1c24;
  pointer-events: none;
}

.chat {
  position: absolute;
  right: 23px;
  bottom: 0;
  display: flex;
  align-items: center;
  gap: 6px;
  width: 200px;
  height: 29px;
  padding-left: 8px;
  border-radius: 4px 4px 0 0;
  background: #29bfff;
  color: #fff;
  font-family: "Liberation Sans", sans-serif;
  font-size: 13px;
  font-weight: 700;
}

.chat svg {
  width: 16px;
  height: 14px;
  fill: #fff;
}

.scrollbar {
  flex: 0 0 17px;
  display: flex;
  flex-direction: column;
  align-items: center;
  padding: 7px 0;
  background: #f1f1f1;
}

.scrollbar svg {
  width: 8px;
  height: 4px;
  fill: #505050;
}

.thumb {
  width: 13px;
  height: 163px;
  margin: 66px 0 auto;
  background: #c1c1c1;
}

/* Download shelf */
.downloads {
  flex: none;
  display: flex;
  align-items: center;
  height: 43px;
  padding: 0 14px 0 3px;
  background: #313f44;
  color: #fff;
}

.download {
  display: flex;
  height: 38px;
  border: 1px solid #a4abad;
  border-radius: 2px;
  background: linear-gradient(#6b7679, #535f63);
  font-size: 11px;
}

.file {
  display: flex;
  align-items: center;
  gap: 12px;
  width: 192px;
  padding-left: 9px;
}

.file-menu {
  width: 12px;
  border-left: 1px solid #a4abad;
}

.file-menu svg {
  width: 8px;
  height: 4px;
  margin: 0 auto 8px;
  fill: #222b2e;
}

.show-all {
  display: flex;
  align-items: center;
  gap: 6px;
  margin-left: auto;
  font-size: 11px;
  text-decoration: underline;
}

.show-all svg {
  width: 14px;
  height: 13px;
  fill: #666b6d;
}

.shelf-close {
  margin-left: 20px;
}

.shelf-close svg {
  width: 9px;
  height: 9px;
  fill: none;
  stroke: #777f82;
  stroke-width: 2;
}

/* Windows taskbar */
.taskbar {
  flex: none;
  display: flex;
  align-items: center;
  gap: 4px;
  height: 30px;
  padding-right: 32px;
  background:
    linear-gradient(62deg, transparent 56%, rgba(10, 35, 70, 0.2) 56%, transparent 68%),
    linear-gradient(90deg, #365f85, #446d93 14%, #3b6489 34%, #264869 38%, #29496a 66%, #3b6289 70%, #31597f 84%, #2d5075 92%, #426b93);
  color: #fff;
}

.start,
.app {
  display: flex;
  align-items: center;
  justify-content: center;
}

.start {
  width: 38px;
}

.app {
  width: 42px;
  height: 28px;
}

.app.open {
  border: 1px solid rgba(200, 216, 230, 0.6);
  background: rgba(190, 205, 215, 0.3);
}

.app.front {
  border-color: #eef3f7;
  background: rgba(205, 215, 222, 0.6);
}

.tray {
  display: flex;
  align-items: center;
  gap: 8px;
  margin-left: auto;
}

.up {
  width: 8px;
  height: 4px;
  margin-right: 5px;
}

.lang {
  margin: 0 30px 0 9px;
}
</style>
